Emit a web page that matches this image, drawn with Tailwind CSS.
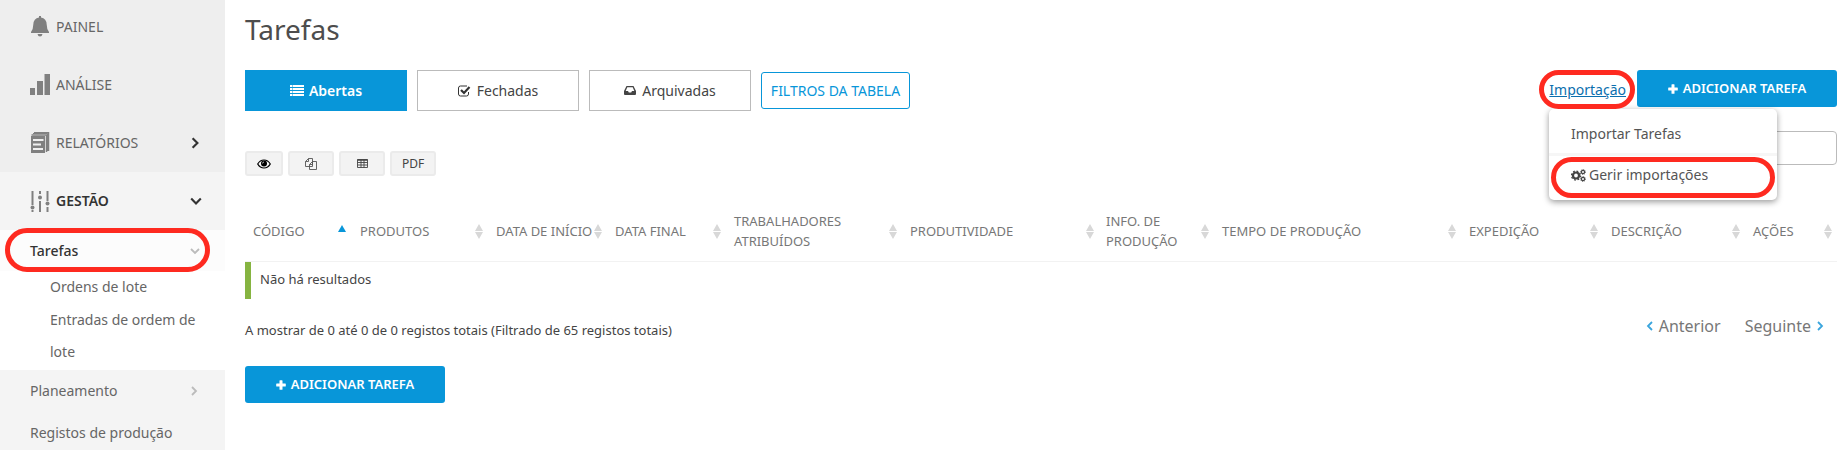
<!DOCTYPE html>
<html lang="pt">
<head>
<meta charset="utf-8">
<meta name="viewport" content="width=device-width, initial-scale=1">
<title>Tarefas</title>
<script src="https://cdn.jsdelivr.net/npm/@tailwindcss/browser@4"></script>
</head>
<body class="flex min-h-screen bg-white font-['Noto_Sans',sans-serif] text-[13px] text-[#444]">
<svg class="hidden" aria-hidden="true">
  <symbol id="plus" viewBox="0 0 10 10"><path d="M3.500 .7q0-.5.5-.5h2q.5 0 .5.5v2.800h2.800q.5 0 .5.5v2q0 .5-.5.5h-2.800v2.800q0 .5-.5.5h-2q-.5 0-.5-.5v-2.800h-2.800q-.5 0-.5-.5v-2q0-.5.5-.5h2.800z"/></symbol>
  <symbol id="chev" viewBox="0 0 10 10"><path d="M3 1l4 4-4 4" fill="none" stroke="currentColor" stroke-width="1.800"/></symbol>
  <symbol id="sort" viewBox="0 0 8 15"><path d="M4 0l4 7H0zM0 8h8l-4 7z"/></symbol>
</svg>

<nav class="w-[225px] shrink-0 bg-[#f4f4f4] text-sm text-[#666]" aria-label="Principal">
  <div class="bg-[#eee] pb-px">
    <a href="#" class="flex h-[55px] items-center gap-[6px] pb-[2px] pl-[30px]">
      <svg class="h-[21px] w-5 fill-[#808080]" viewBox="0 0 20 21"><path d="M9 0h2v1.500q5.500 1 5.700 7 .1 5 2.300 7.500v1H1v-1q2.200-2.500 2.300-7.500.2-6 5.700-7zM7.500 18h5q-.5 2.500-2.500 2.500T7.500 18z"/></svg>
      PAINEL</a>
    <a href="#" class="flex h-[58px] items-center gap-[6px] pl-[30px] pt-px">
      <svg class="h-[21px] w-5 fill-[#808080]" viewBox="0 0 20 21"><path d="M0 14h5v7H0zM7 7h6v14H7zM14.500 0h5.500v21h-5.500z"/></svg>
      ANÁLISE</a>
    <a href="#" class="flex h-[58px] items-center gap-[6px] pl-[30px] pr-[24px] pt-px">
      <svg class="h-[21px] w-5" viewBox="0 0 20 21"><path d="M1 4h14v17H1z" fill="#808080"/><path d="M1.500 3H16.500V20M4 .7h14.500V19" fill="none" stroke="#808080" stroke-width="1.500"/><path d="M3 1.500h14.500V19" fill="none" stroke="#808080" stroke-width="1"/><path d="M3 8h10.500M3 12.500h8M3 17h10" stroke="#eee" stroke-width="2"/></svg>
      <span class="grow">RELATÓRIOS</span>
      <svg class="size-3 text-[#333]"><use href="#chev"/></svg></a>
  </div>
  <a href="#" class="flex h-[58px] items-center gap-[6px] pl-[30px] pr-[23px] font-semibold text-[#333]">
    <svg class="h-[21px] w-5" viewBox="0 0 20 21" stroke="#808080" stroke-width="2" fill="#808080"><path d="M2.500 0v14M2.500 19v2M10 0v3M10 10v11M17.500 0v10M17.500 16v5"/><g stroke="none"><circle cx="2.500" cy="16.500" r="2"/><circle cx="10" cy="6.500" r="2"/><circle cx="17.500" cy="12.500" r="2"/></g></svg>
    <span class="grow">GESTÃO</span>
    <svg class="size-3 rotate-90 text-[#333]"><use href="#chev"/></svg></a>
  <div class="bg-white pb-[2px]">
    <div class="relative bg-[#fcfcfc]">
      <a href="#" class="flex h-[41px] items-center pl-[30px] pr-[25px] font-medium text-[#333]"><span class="grow">Tarefas</span>
      <svg class="size-[10px] rotate-90 text-[#bbb]"><use href="#chev"/></svg></a>
      <div class="pointer-events-none absolute -bottom-px -top-[2px] left-[5px] right-[15px] rounded-[22px] border-5 border-[#fe2a20]"></div>
    </div>
    <a href="#" class="block pl-[50px] leading-8">Ordens de lote</a>
    <a href="#" class="block pl-[50px] pr-6 pt-px leading-8">Entradas de ordem de lote</a>
  </div>
  <a href="#" class="flex h-[42px] items-center pl-[30px] pr-[26px]"><span class="grow">Planeamento</span><svg class="size-[10px] text-[#bbb]"><use href="#chev"/></svg></a>
  <a href="#" class="flex h-[38px] items-center pl-[30px] pt-[3px]">Registos de produção</a>
</nav>

<main class="min-w-0 grow pl-5 pr-2">
  <h1 class="pt-[9px] text-[28px] leading-10 text-[#4d4d4d]">Tarefas</h1>
  <div class="mt-[21px] flex items-start gap-[10px]">
    <button class="flex h-[41px] w-[162px] items-center justify-center gap-[5px] bg-[#0896d9] text-sm font-semibold text-white">
      <svg class="h-[11px] w-[14px] fill-current" viewBox="0 0 14 11"><path d="M0 0h2v2H0zM2.500 0H14v2H2.500zM0 3h2v2H0zM2.500 3H14v2H2.500zM0 6h2v2H0zM2.500 6H14v2H2.500zM0 9h2v2H0zM2.500 9H14v2H2.500z"/></svg>Abertas</button>
    <button class="flex h-[41px] w-[162px] items-center justify-center gap-[6px] border border-[#bbb] text-sm">
      <svg class="h-3 w-[13px]" viewBox="0 0 13 12" fill="none" stroke="#333"><path d="M10.500 7v2q0 2-2 2h-6q-2 0-2-2V3q0-2 2-2h6.500"/><path d="M3 5l3 3 5.500-6" stroke-width="2.200"/></svg>Fechadas</button>
    <button class="flex h-[41px] w-[162px] items-center justify-center gap-[6px] border border-[#bbb] text-sm">
      <svg class="h-[9px] w-3 fill-[#444]" viewBox="0 0 12 9"><path fill-rule="evenodd" d="M2.500 0h7L12 5v3q0 1-1 1H1q-1 0-1-1V5zM3.300 1.300L1.700 5H4l.8 1.500h2.400L8 5h2.300L8.700 1.300z"/></svg>Arquivadas</button>
    <button class="mt-[2px] flex h-[37px] w-[149px] items-center justify-center rounded-[3px] border border-[#0896d9] text-sm text-[#0896d9]">FILTROS DA TABELA</button>
    <div class="relative ml-auto flex items-start">
      <div class="relative mr-[11px]">
        <a href="#" class="block text-sm leading-[39px] text-[#0b6fae] underline">Importação</a>
        <div class="pointer-events-none absolute -left-[10px] -right-[9px] inset-y-0 z-20 rounded-[20px] border-5 border-[#fe2a20]"></div>
      </div>
      <button class="flex h-[37px] w-[200px] items-center justify-center gap-[5px] rounded-[3px] bg-[#0896d9] pt-px font-semibold text-white"><svg class="size-[10px] fill-current"><use href="#plus"/></svg>ADICIONAR TAREFA</button>
      <div class="absolute right-[60px] top-[39px] z-10 w-[228px] rounded-[5px] bg-white pb-[2px] text-sm text-[#555] shadow-[0_2px_6px_rgba(0,0,0,0.4)]" role="menu">
        <a href="#" role="menuitem" class="flex h-[47px] items-center border-b-3 border-[#f6f6f6] pl-[22px] pt-[5px]">Importar Tarefas</a>
        <a href="#" role="menuitem" class="relative flex h-[42px] items-center gap-[3px] pb-1 pl-[22px]">
          <svg class="h-[13px] w-[15px]" viewBox="0 0 15 13" fill="none" stroke="#444"><circle cx="5" cy="6.500" r="3" stroke-width="2.200"/><circle cx="5" cy="6.500" r="4.500" stroke-width="1.300" stroke-dasharray="1.800 1.730"/><circle cx="12" cy="3" r="1.600" stroke-width="1.200"/><circle cx="12" cy="3" r="2.500" stroke-width=".8" stroke-dasharray="1 .96"/><circle cx="12" cy="10" r="1.600" stroke-width="1.200"/><circle cx="12" cy="10" r="2.500" stroke-width=".8" stroke-dasharray="1 .96"/></svg>Gerir importações
          <span class="pointer-events-none absolute inset-x-[2px] bottom-0 top-px rounded-[21px] border-5 border-[#fe2a20]"></span></a>
      </div>
    </div>
  </div>

  <div class="mt-5 flex h-[45px] items-start justify-between">
    <div class="mt-5 flex gap-[5px]">
      <button aria-label="Colunas" class="flex h-[25px] w-[38px] items-center justify-center rounded-[3px] border-2 border-[#ebebeb] bg-[#f3f3f3]"><svg class="h-[10px] w-[14px]" viewBox="0 0 14 10"><path d="M.7 5Q3 1 7 1t6.300 4Q11 9 7 9T.7 5z" fill="none" stroke="#000" stroke-width="1.200"/><circle cx="7" cy="4.500" r="3"/><path d="M5.500 4.500Q5.500 3 7 3" fill="none" stroke="#fff" stroke-width=".7"/></svg></button>
      <button aria-label="Copiar" class="flex h-[25px] w-[46px] items-center justify-center rounded-[3px] border-2 border-[#ebebeb] bg-[#f3f3f3]"><svg class="size-3" viewBox="0 0 12 12" fill="#f3f3f3" stroke="#555" stroke-width=".9"><path d="M.5 3.500l3-3h4v8h-7zM3.500.5v3h-3M4.500 6.500l3-3h4v8h-7zM7.500 3.500v3h-3"/></svg></button>
      <button aria-label="Exportar tabela" class="flex h-[25px] w-[46px] items-center justify-center rounded-[3px] border-2 border-[#ebebeb] bg-[#f3f3f3]"><svg class="h-[9px] w-[11px]" viewBox="0 0 11 9" fill="none" stroke="#444" stroke-width=".9"><path d="M.5.500h10v8H.5zM.5 3.500h10M.5 6h10M4 1v7.500M7 1v7.500"/><path d="M.5 1h10" stroke-width="1.500"/></svg></button>
      <button class="flex h-[25px] w-[46px] items-center justify-center rounded-[3px] border-2 border-[#ebebeb] bg-[#f3f3f3] text-xs">PDF</button>
    </div>
    <input type="search" aria-label="Procurar" class="h-[34px] w-[240px] rounded-[4px] border border-[#bbb] px-2">
  </div>

  <table class="mt-[35px] w-full table-fixed border-collapse">
    <colgroup><col class="w-[107px]"><col class="w-[136px]"><col class="w-[119px]"><col class="w-[119px]"><col class="w-[176px]"><col class="w-[197px]"><col class="w-[115px]"><col><col class="w-[142px]"><col class="w-[142px]"><col class="w-[92px]"></colgroup>
    <thead class="text-left leading-5 text-[#777]">
      <tr class="h-[50px] border-b border-[#f2f2f2]">
        <th class="pb-[9px] pl-2 pr-[6px] font-normal"><div class="flex items-center justify-between">CÓDIGO<svg class="mb-[5px] h-[7px] w-2 fill-[#0896d9]" viewBox="0 0 8 7"><path d="M4 0l4 7H0z"/></svg></div></th>
        <th class="pb-[9px] pl-2 pr-[5px] font-normal"><div class="flex items-center justify-between">PRODUTOS<svg class="h-[15px] w-2 fill-[#d8d8d8]"><use href="#sort"/></svg></div></th>
        <th class="whitespace-nowrap pb-[9px] pl-2 pr-[5px] font-normal"><div class="flex items-center justify-between">DATA DE INÍCIO<svg class="h-[15px] w-2 shrink-0 fill-[#d8d8d8]"><use href="#sort"/></svg></div></th>
        <th class="pb-[9px] pl-2 pr-[5px] font-normal"><div class="flex items-center justify-between">DATA FINAL<svg class="h-[15px] w-2 fill-[#d8d8d8]"><use href="#sort"/></svg></div></th>
        <th class="pb-[9px] pl-2 pr-[5px] font-normal"><div class="flex items-center justify-between"><span>TRABALHADORES<br>ATRIBUÍDOS</span><svg class="h-[15px] w-2 fill-[#d8d8d8]"><use href="#sort"/></svg></div></th>
        <th class="pb-[9px] pl-2 pr-[5px] font-normal"><div class="flex items-center justify-between">PRODUTIVIDADE<svg class="h-[15px] w-2 fill-[#d8d8d8]"><use href="#sort"/></svg></div></th>
        <th class="pb-[9px] pl-[7px] pr-[5px] font-normal"><div class="flex items-center justify-between"><span>INFO. DE<br>PRODUÇÃO</span><svg class="h-[15px] w-2 fill-[#d8d8d8]"><use href="#sort"/></svg></div></th>
        <th class="pb-[9px] pl-2 pr-[5px] font-normal"><div class="flex items-center justify-between">TEMPO DE PRODUÇÃO<svg class="h-[15px] w-2 fill-[#d8d8d8]"><use href="#sort"/></svg></div></th>
        <th class="pb-[9px] pl-2 pr-[5px] font-normal"><div class="flex items-center justify-between">EXPEDIÇÃO<svg class="h-[15px] w-2 fill-[#d8d8d8]"><use href="#sort"/></svg></div></th>
        <th class="pb-[9px] pl-2 pr-[5px] font-normal"><div class="flex items-center justify-between">DESCRIÇÃO<svg class="h-[15px] w-2 fill-[#d8d8d8]"><use href="#sort"/></svg></div></th>
        <th class="pb-[9px] pl-2 pr-[5px] font-normal"><div class="flex items-center justify-between">AÇÕES<svg class="h-[15px] w-2 fill-[#d8d8d8]"><use href="#sort"/></svg></div></th>
      </tr>
    </thead>
    <tbody><tr class="h-[37px]"><td colspan="11" class="p-0"><div class="flex h-[37px] items-center border-l-6 border-[#86b441] pl-[9px]">Não há resultados</div></td></tr></tbody>
  </table>

  <div class="mt-[17px] flex items-start justify-between">
    <p class="mt-1 leading-5">A mostrar de 0 até 0 de 0 registos totais (Filtrado de 65 registos totais)</p>
    <div class="flex gap-6 pr-3 text-base leading-5 text-[#777]">
      <a href="#" class="flex items-center gap-1"><svg class="size-[10px] rotate-180 text-[#3aa5dd]"><use href="#chev"/></svg>Anterior</a>
      <a href="#" class="flex items-center gap-1">Seguinte<svg class="size-[10px] text-[#3aa5dd]"><use href="#chev"/></svg></a>
    </div>
  </div>
  <button class="mt-[26px] flex h-[37px] w-[200px] items-center justify-center gap-[5px] rounded-[3px] bg-[#0896d9] pt-px font-semibold text-white"><svg class="size-[10px] fill-current"><use href="#plus"/></svg>ADICIONAR TAREFA</button>
</main>
</body>
</html>
